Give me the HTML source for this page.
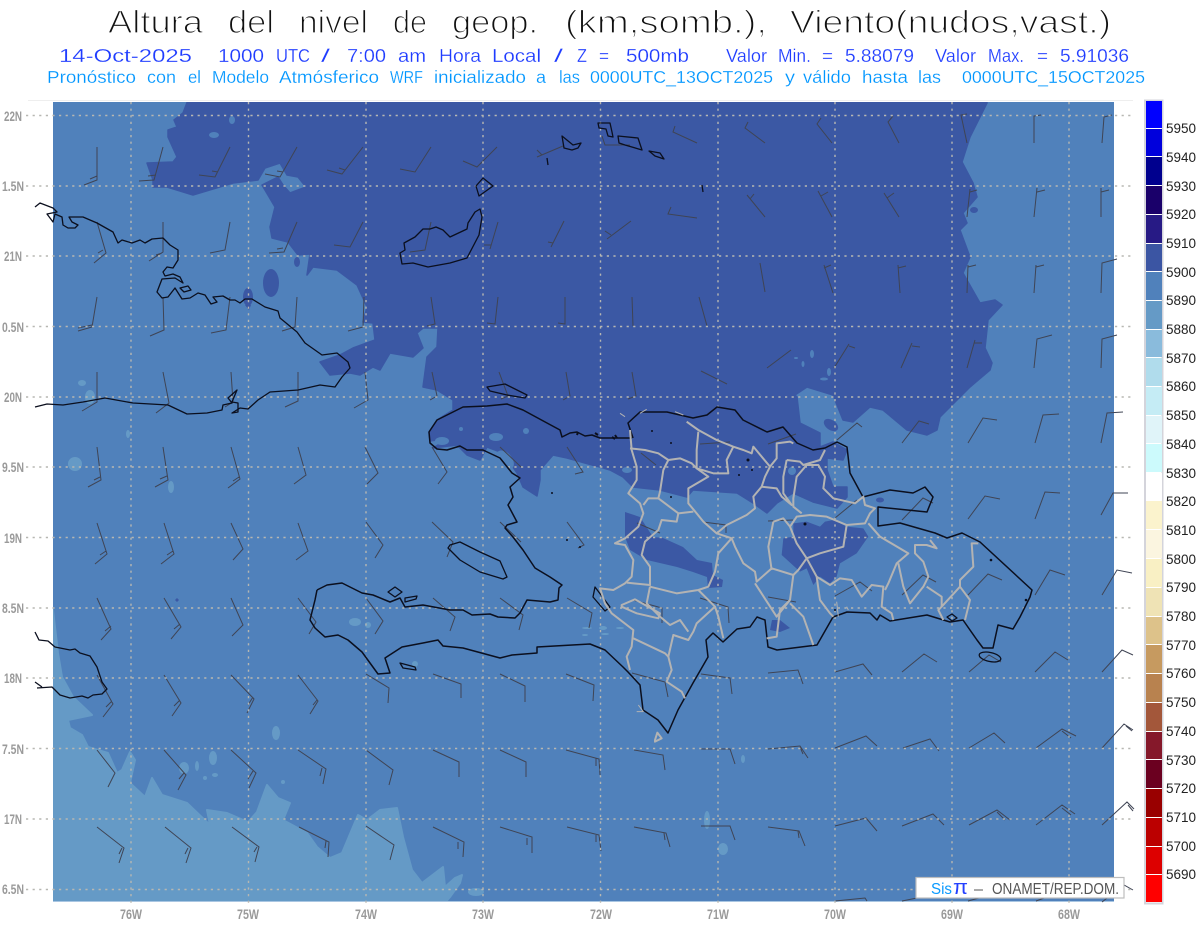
<!DOCTYPE html>
<html lang="es"><head><meta charset="utf-8"><title>Altura del nivel de geop.</title>
<style>
html,body{margin:0;padding:0;background:#fff;width:1200px;height:927px;overflow:hidden}
svg{display:block}
text{font-family:"Liberation Sans",sans-serif;white-space:pre}
.t{font-size:32px;fill:#111;stroke:#fff;stroke-width:1.2px}
.a{font-size:18px;fill:#1f3cff;stroke:#fff;stroke-width:.2px}
.b{font-size:17.5px;fill:#0096ff;stroke:#fff;stroke-width:.2px}
.g{font-size:14px;font-weight:700;fill:#9a9a9a}
.l{font-size:13.5px;fill:#222}
</style></head><body>
<svg width="1200" height="927" viewBox="0 0 1200 927" xmlns="http://www.w3.org/2000/svg">
<rect width="1200" height="927" fill="#fff"/>
<!-- titles -->
<g>
<text class="t" x="108" y="33" textLength="95" lengthAdjust="spacingAndGlyphs">Altura</text>
<text class="t" x="228" y="33" textLength="46" lengthAdjust="spacingAndGlyphs">del</text>
<text class="t" x="299" y="33" textLength="69" lengthAdjust="spacingAndGlyphs">nivel</text>
<text class="t" x="393" y="33" textLength="34" lengthAdjust="spacingAndGlyphs">de</text>
<text class="t" x="452" y="33" textLength="86" lengthAdjust="spacingAndGlyphs">geop.</text>
<text class="t" x="565" y="33" textLength="202" lengthAdjust="spacingAndGlyphs">(km,somb.),</text>
<text class="t" x="790" y="33" textLength="321" lengthAdjust="spacingAndGlyphs">Viento(nudos,vast.)</text>
</g>
<g>
<text class="a" x="59" y="62" textLength="133" lengthAdjust="spacingAndGlyphs">14-Oct-2025</text>
<text class="a" x="218" y="62" textLength="46" lengthAdjust="spacingAndGlyphs">1000</text>
<text class="a" x="276" y="62" textLength="34" lengthAdjust="spacingAndGlyphs">UTC</text>
<text class="a" x="321" y="62" textLength="9" lengthAdjust="spacingAndGlyphs">/</text>
<text class="a" x="347" y="62" textLength="39" lengthAdjust="spacingAndGlyphs">7:00</text>
<text class="a" x="398" y="62" textLength="28" lengthAdjust="spacingAndGlyphs">am</text>
<text class="a" x="439" y="62" textLength="42" lengthAdjust="spacingAndGlyphs">Hora</text>
<text class="a" x="492" y="62" textLength="49" lengthAdjust="spacingAndGlyphs">Local</text>
<text class="a" x="554" y="62" textLength="9" lengthAdjust="spacingAndGlyphs">/</text>
<text class="a" x="577" y="62" textLength="10" lengthAdjust="spacingAndGlyphs">Z</text>
<text class="a" x="599" y="62" textLength="10" lengthAdjust="spacingAndGlyphs">=</text>
<text class="a" x="626" y="62" textLength="63" lengthAdjust="spacingAndGlyphs">500mb</text>
<text class="a" x="726" y="62" textLength="41" lengthAdjust="spacingAndGlyphs">Valor</text>
<text class="a" x="778" y="62" textLength="33" lengthAdjust="spacingAndGlyphs">Min.</text>
<text class="a" x="822" y="62" textLength="11" lengthAdjust="spacingAndGlyphs">=</text>
<text class="a" x="845" y="62" textLength="69" lengthAdjust="spacingAndGlyphs">5.88079</text>
<text class="a" x="935" y="62" textLength="41" lengthAdjust="spacingAndGlyphs">Valor</text>
<text class="a" x="988" y="62" textLength="36" lengthAdjust="spacingAndGlyphs">Max.</text>
<text class="a" x="1037" y="62" textLength="11" lengthAdjust="spacingAndGlyphs">=</text>
<text class="a" x="1060" y="62" textLength="69" lengthAdjust="spacingAndGlyphs">5.91036</text>
</g>
<g>
<text class="b" x="47" y="83" textLength="89" lengthAdjust="spacingAndGlyphs">Pronóstico</text>
<text class="b" x="147" y="83" textLength="29" lengthAdjust="spacingAndGlyphs">con</text>
<text class="b" x="188" y="83" textLength="13" lengthAdjust="spacingAndGlyphs">el</text>
<text class="b" x="212" y="83" textLength="57" lengthAdjust="spacingAndGlyphs">Modelo</text>
<text class="b" x="279" y="83" textLength="100" lengthAdjust="spacingAndGlyphs">Atmósferico</text>
<text class="b" x="390" y="83" textLength="33" lengthAdjust="spacingAndGlyphs">WRF</text>
<text class="b" x="434" y="83" textLength="92" lengthAdjust="spacingAndGlyphs">inicializado</text>
<text class="b" x="536" y="83" textLength="10" lengthAdjust="spacingAndGlyphs">a</text>
<text class="b" x="559" y="83" textLength="21" lengthAdjust="spacingAndGlyphs">las</text>
<text class="b" x="590" y="83" textLength="183" lengthAdjust="spacingAndGlyphs">0000UTC_13OCT2025</text>
<text class="b" x="785" y="83" textLength="10" lengthAdjust="spacingAndGlyphs">y</text>
<text class="b" x="803" y="83" textLength="48" lengthAdjust="spacingAndGlyphs">válido</text>
<text class="b" x="862" y="83" textLength="46" lengthAdjust="spacingAndGlyphs">hasta</text>
<text class="b" x="918" y="83" textLength="23" lengthAdjust="spacingAndGlyphs">las</text>
<text class="b" x="962" y="83" textLength="183" lengthAdjust="spacingAndGlyphs">0000UTC_15OCT2025</text>
</g>
<line x1="28" y1="100.500" x2="1133" y2="100.500" stroke="#eee"/>

<!-- map background -->
<rect x="53" y="102" width="1061" height="800" fill="#5081bb"/>
<clipPath id="m"><rect x="53" y="102" width="1061" height="799"/></clipPath>
<g clip-path="url(#m)">
<!-- light band -->
<path fill="#659ac6" stroke="#659ac6" stroke-width="2" stroke-linejoin="round" d="M53 610L58 653L62 677L73 697L92 715L68 720L70 728L82 735L88 747L108 753L117 773L122 770L130 752L135 760L130 783L145 797L152 778L162 795L187 803L210 825L207 810L227 813L248 822L257 812L267 785L278 798L290 803L283 820L307 833L317 847L330 858L342 853L358 815L367 820L380 810L397 808L403 837L412 870L422 883L443 867L445 887L455 878L462 875L460 883L450 897L443 905L53 905Z"/>
<g fill="#659ac6">
<ellipse cx="75" cy="464" rx="7" ry="7"/><ellipse cx="128" cy="434" rx="2" ry="4"/><ellipse cx="171" cy="487" rx="3" ry="6"/>
<ellipse cx="355" cy="622" rx="6" ry="4"/><ellipse cx="368" cy="625" rx="3" ry="3"/><ellipse cx="276" cy="733" rx="4" ry="7"/>
<ellipse cx="213" cy="758" rx="4" ry="7"/><ellipse cx="184" cy="768" rx="5" ry="6"/><ellipse cx="197" cy="766" rx="2" ry="5"/>
<ellipse cx="215" cy="775" rx="3" ry="2"/><ellipse cx="205" cy="778" rx="2" ry="2"/><ellipse cx="283" cy="782" rx="2" ry="2"/>
<ellipse cx="707" cy="820" rx="3" ry="9"/><ellipse cx="723" cy="849" rx="5" ry="6"/><ellipse cx="743" cy="759" rx="2" ry="4"/>
<ellipse cx="476" cy="892" rx="8" ry="4"/><ellipse cx="415" cy="664" rx="3" ry="3"/>
<ellipse cx="82" cy="383" rx="4" ry="3"/><ellipse cx="90" cy="397" rx="5" ry="7"/>
<ellipse cx="587" cy="628" rx="5" ry="1"/><ellipse cx="603" cy="628" rx="4" ry="2"/><ellipse cx="585" cy="635" rx="3" ry="1"/><ellipse cx="605" cy="634" rx="4" ry="1"/><ellipse cx="620" cy="628" rx="4" ry="1"/>
</g>
<!-- dark main -->
<path fill="#3b58a4" stroke="#3b58a4" stroke-width="1.500" stroke-linejoin="round" d="M188 100L183 113L174 120L177 127L168 130L168 137L177 157L173 162L147 163L153 180L153 187L167 187L193 195L233 183L258 180L265 168L280 163L287 175L298 177L306 187L290 193L283 185L278 177L262 185L275 207L270 227L272 238L288 242L298 255L310 254L307 275L313 267L337 270L357 285L367 307L363 322L373 323L375 340L353 348L340 355L320 362L330 375L350 373L360 375L373 367L380 370L390 353L413 357L423 348L417 333L423 328L438 328L437 347L427 357L423 387L437 390L453 400L453 410L437 420L429 432L430 441L437 440L443 442L433 448L457 445L467 455L480 460L487 447L503 453L517 473L523 487L537 496L540 480L540 470L553 455L567 458L592 465L600 467L610 470L623 477L633 487L660 490L687 497L693 490L737 493L753 503L767 513L777 503L793 493L813 502L837 508L847 497L847 487L833 487L827 470L827 458L843 460L847 450L833 442L820 447L820 433L800 423L797 397L795 395L807 387L833 395L843 420L853 422L870 407L883 410L907 430L927 435L937 430L940 417L970 387L990 370L992 363L985 348L988 320L1002 305L995 300L980 303L963 273L970 257L960 230L967 223L963 213L977 197L973 183L962 162L970 137L987 103L987 100Z"/>
<g fill="#3b58a4">
<ellipse cx="271" cy="283" rx="8" ry="14"/><ellipse cx="248" cy="297" rx="5" ry="9"/><path d="M245 305L251 305L249 310Z"/>
<ellipse cx="297" cy="262" rx="3" ry="5"/>
<path d="M625 512L640 517L653 537L663 538L683 547L697 560L712 563L713 575L723 580L722 587L708 588L707 577L693 572L677 567L647 560L630 550L625 537Z"/>
<path transform="translate(580 390) scale(.33333)" d="M640 400L640 440L610 445L605 495L660 545L680 535L700 585L720 560L750 580L770 560L780 520L830 490L865 440L850 415L800 410L760 390L735 395L720 410L680 395Z"/>
<path d="M772 620L780 620L790 628L780 632L770 630Z"/>
<ellipse cx="831" cy="425" rx="8" ry="5" transform="rotate(35 831 425)"/>
<ellipse cx="880" cy="500" rx="4" ry="2.500"/>
<ellipse cx="974" cy="210" rx="4" ry="3"/>
<path d="M177 598l2 2-2 2-2-2z"/>
</g>
<g fill="#5081bb">
<ellipse cx="214" cy="135" rx="5" ry="3"/><ellipse cx="232" cy="120" rx="3" ry="4"/>
<ellipse cx="812" cy="354" rx="2" ry="4"/><ellipse cx="803" cy="364" rx="1.500" ry="3"/><ellipse cx="829" cy="372" rx="2" ry="4"/>
<ellipse cx="824" cy="379" rx="4" ry="1.500"/><ellipse cx="796" cy="358" rx="2" ry="1"/>
<ellipse cx="496" cy="437" rx="7" ry="4"/><ellipse cx="526" cy="431" rx="3" ry="3"/><ellipse cx="461" cy="429" rx="2" ry="2"/>
<ellipse cx="442" cy="441" rx="7" ry="4"/><ellipse cx="505" cy="460" rx="7" ry="11" transform="rotate(-40 505 460)"/>
<ellipse cx="627" cy="470" rx="5" ry="3"/><ellipse cx="792" cy="471" rx="4" ry="4"/>
</g>
</g>
<line x1="53" y1="901.500" x2="1114" y2="901.500" stroke="#a9c6e2"/>

<!-- wind barbs -->
<path fill="none" stroke="#3f4454" stroke-width="1" d="
M97 147l0 33l-13 5M97 176l-7 3M163 147l-9 33l-15 1M156 175l-8 1M230 147l-15 30l-16-2M218 172l-6-1M297 147l-17 30l-15-3M283 172l-6-1M363 147l-21 27l-15-4M345 170l-6-2M431 147l-16 25l-15-3M497 147l-20 20l-14-6M563 146l-26 11M542 155l-5-5M630 145l-25 0l-3-9M697 143l-24-11l2-6M765 143l-20-15l3-6M832 143l-15-19l4-6M899 143l-11-21l5-6M967 143l-6-28l6-1M1034 143l0-27l7-1M1102 143l2-26l8-2
M97 222l9 31l-12 10M103 250l-5 3M163 222l0 30l-14 9M162 253l-6 2M230 222l-5 28l-15 3M297 222l-13 30l-15 1M283 248l-6 1M363 222l-13 25l-16-2M431 222l-6 28l-15 2M498 222l-8 27M491 245l-7 0M564 221l-13 26M553 243l-5-1M631 221l-24 18M611 235l-6-4M697 218l-29-4l3-7M765 217l-18-22M750 199l4-5M832 217l-14-26M821 196l7-4M899 217l-15-24M887 198l7-5M967 217l3-28M970 192l7-2M1034 217l3-29M1037 192l8-2M1101 217l0-29M1101 192l8-2
M97 297l-5 30l-14 4M92 325l-14 3M163 297l1 33l-14 6M230 297l-4 33l-15 3M297 297l-2 30l-13 4M364 297l-1 30l-15 4M431 297l4 27l-8 2M498 297l-3 27l-8-1M565 297l0 27l-7-1M632 297l1 29M699 297l8 29M760 263l5 29M833 293l-9-28M824 268l7-3M900 293l-2-28M898 268l8-2M967 293l1-28M968 267l8-2M1034 293l2-28M1036 267l8-2M1101 293l1-30l15-4
M97 372l0 30l-15 9M163 372l6 31l-13 10M231 372l2 30l-8 5M298 372l0 29l-13 6M365 372l3 28l-14 8M432 372l5 24l-7 4M499 372l9 24l-7 3M566 372l4 24l-7 4M632 372l4 24l-8 3M701 371l26 13M767 368l24-18M834 368l15-24M849 346l6 2M901 368l11-25M912 346l8 1M967 368l8-28M974 343l8 0M1034 368l3-29l15-4M1101 368l1-29l15-4
M97 447l4 33l-13 7M100 477l-6 3M163 447l5 33l-13 7M167 476l-7 3M231 447l9 32l-12 9M239 477l-6 4M298 447l8 28l-12 9M365 447l13 26l-11 11M432 447l15 25l-9 12M500 447l21 20M567 447l16 25l-8 2M641 453l15 12M700 444l30-2M768 444l28-10M837 440l20-17l5 4M902 443l17-22l10 3M968 443l15-25l14 2M1035 443l8-28l16-1M1101 443l6-30l16-1
M97 523l10 31l-12 10M106 551l-6 4M164 523l10 31l-13 10M173 551l-6 4M231 523l12 26l-10 11M298 523l10 28l-12 9M366 522l17 23l-8 13M432 522l21 20l-6 15M500 522l21 20M567 522l17 23l-6 3M637 523l23 10M703 522l23 3l0 8M768 521l25-1M835 518l22-18M902 520l21-22l10 5M968 519l17-23l15 3M1035 519l10-27l15 1M1101 515l12-22l15 0
M97 598l14 31l-10 11M111 626l-6 5M164 598l17 29l-10 12M180 624l-6 5M231 598l12 27l-11 11M298 598l18 24l-7 12M366 598l17 23l-8 13M433 598l22 19l-5 14M500 598l23 17l-4 15M567 598l25 15l-3 15M633 600l29 8l0 15M700 598l28 9l1 16M768 597l28 5M835 596l25-14l12 9M902 595l21-20l13 7M968 595l20-21l14 6M1035 595l15-25l15 5M1102 595l15-25l15 3
M97 675l16 29l-10 13M112 701l-6 6M164 675l17 28l-9 13M180 700l-6 6M231 675l23 24l-7 14M253 697l-5 8M298 675l20 26l-8 13M317 700l-4 5M366 674l23 14l-1 15M433 674l28 10l0 14M500 674l25 12l0 16M566 674l28 11l-1 16M632 673l33 9l3 15M701 674l29 4l2 16M768 673l30-3l5 14M835 672l28-8l9 11M902 672l22-18l13 8M969 672l20-17l12 7M1035 672l20-20l13 8M1102 672l20-22l11 5
M97 750l18 23l-7 14M164 750l22 25l-8 15M184 773l-5 6M231 750l25 23l-7 15M253 771l-5 8M298 750l28 19l-3 15M322 768l-2 8M366 750l27 20l-4 15M433 750l26 12l0 15M500 750l26 12l0 15M566 750l33 9l1 16M596 758l0 8M634 750l29 5l2 15M701 749l29 0l5 15M768 749l32-3l8 12M800 747l3 7M835 748l31-12l11 10M903 748l27-9l9 12M969 748l25-15l11 10M1036 748l26-19l14 7M1062 731l9 7M1102 748l22-24l9 6M1126 726l6 5
M97 827l27 21l-5 15M122 848l-3 6M165 827l26 21l-5 15M188 848l-3 6M232 827l27 20l-4 15M257 847l-3 5M299 827l30 15l-1 15M326 841l-1 7M366 826l28 19l-4 15M433 827l31 15l-1 15M458 842l0 7M500 827l32 10l0 16M527 838l0 7M567 827l32 8l2 16M596 835l0 7M634 827l32 6l4 14M664 833l1 7M701 826l29 0l5 14M768 827l31 4l6 15M798 831l1 7M835 826l31-8l11 13M902 826l31-12l11 11M969 825l28-15l13 10M997 812l8 8M1036 825l26-20l13 9M1062 808l9 7M1102 825l25-23l7 7M1128 805l5 6
M835 901l30-3l2 3M902 901l25-5M968 901l22-6M1036 901l22-8M1102 902l22-17l9 5"/>

<!-- graticule -->
<g fill="none" stroke="#b7b7b2" stroke-width="1.400" stroke-dasharray="2.200 4.400">
<path d="M26 115.500H1133M26 186H1133M26 256H1133M26 326.500H1133M26 397H1133M26 467H1133M26 537.500H1133M26 608H1133M26 678H1133M26 748.500H1133M26 819H1133M26 889.500H1133"/>
<path d="M131 102V906M248.500 102V906M366 102V906M483 102V906M600.500 102V906M718 102V906M835 102V906M952 102V906M1069 102V906"/>
</g>

<!-- coasts -->
<g fill="none" stroke="#0b0f1e" stroke-width="1.300" stroke-linejoin="round">
<path d="M35 207L40 203L53 208L57 212L47 214L53 222L55 214L62 217L63 225L68 228L75 228L78 225L72 222L69 217L83 217L97 223L113 232L118 243L122 240L132 243L140 240L145 243L152 239L163 238L170 245L178 250L178 260L173 268L167 267L163 272L165 276L173 274L180 277L183 283L175 278L162 279L157 292L162 298L168 297L175 288L182 299L190 298L198 293L205 295L211 304L217 302L213 297L223 296L230 300L235 300L240 303L245 299L252 299L265 307L278 311L280 318L297 332L305 343L322 355L337 353L348 362L350 368L342 377L335 387L320 385L298 390L270 392L258 400L248 409L240 408L232 413L238 412L238 403L232 402L237 390L228 398L232 403L223 405L222 410L207 413L187 414L168 405L133 403L105 398L83 402L63 405L47 404L35 407"/>
<path d="M180 288L188 286L191 290L184 292Z"/>
<path d="M35 632L39 640L48 641L55 647L70 650L75 649L80 653L90 656L97 667L102 682L107 689L102 694L93 695L88 698L82 696L70 698L60 695L52 687L37 688M35 682L42 687"/>
<path stroke-width="1.500" d="M317 590L327 585L342 583L362 593L373 595L390 602L400 598L405 607L423 605L450 610L463 610L472 615L490 614L498 617L515 618L520 613L527 600L550 602L558 600L559 588L562 585L550 577L535 568L523 550L513 537L505 528L507 525L517 522L508 505L513 497L510 487L520 478L512 473L500 458L483 450L467 450L460 446L447 450L437 449L430 443L429 432L437 420L453 412L463 407L487 406L507 404L523 410L547 423L560 430L562 437L570 433L577 432L585 436L592 435L600 438L612 438L632 438"/>
<path stroke-width="1.500" d="M317 590L315 600L310 620L315 628L325 637L338 635L348 640L362 652L378 674L390 673L385 658L402 647L423 643L438 640L443 646L463 648L500 658L512 655L537 653L537 647L590 644L605 650L623 667L628 672L640 685L643 710L658 720L668 733L678 710L693 683L708 657L706 640L713 633L723 642L737 629L750 627L757 617L765 620L768 647L777 650L817 645L833 617L847 612L870 613L877 620L880 615L890 621L927 615L950 622L963 620L977 640L983 648L993 648L998 625L1013 629L1020 617L1030 597L1032 590L980 542L962 533L947 538L935 533L900 523L878 526L878 507L927 512L933 497L925 487L913 493L890 490L863 497L850 473L847 447L837 442L825 448L813 450L797 443L783 427L767 432L743 420L735 410L717 407L707 415L693 418L667 412L640 412L628 423L633 438"/>
<path d="M450 545L460 542L480 552L500 561L507 577L503 579L480 572L460 560L448 548Z"/>
<path d="M487 387L505 384L527 395L525 398L507 395L490 391Z"/>
<path d="M388 592L395 587L402 592L395 597Z"/><path d="M405 598L417 596L416 599L405 602Z"/>
<path d="M400 663L415 667L416 670L403 668Z"/><path d="M595 587L610 607L605 611L593 597Z"/>
<ellipse cx="990" cy="657" rx="11" ry="4.500" transform="rotate(12 990 657)"/>
<path d="M947 617L952 614L957 618L952 621Z"/>
<path d="M400 253L405 250L404 243L415 237L423 229L430 229L436 227L443 230L450 237L467 229L468 223L475 212L480 209L482 217L479 235L467 258L450 263L428 267L413 263L402 264Z"/>
<path d="M476 186L483 178L493 186L479 196Z"/>
<path d="M562 136L573 145L581 143L578 148L572 150L564 148Z"/><path d="M547 158L548 165"/>
<path d="M598 123L610 123L612 132L613 137L608 136L606 129L599 128Z"/>
<path d="M618 136L638 138L642 150L625 145L619 143Z"/><path d="M649 151L660 153L664 159L655 156Z"/>
<path d="M702 185L703 192"/>
<path stroke-width="2" d="M595 433l3 2M612 437l3 2M615 435l2 3M578 432l-1 3"/>
</g>
<g fill="#0b0f1e"><circle cx="652" cy="431" r="1"/><circle cx="671" cy="443" r="1"/><circle cx="748" cy="460" r="1.500"/><circle cx="752" cy="470" r="1"/><circle cx="805" cy="524" r="1.500"/><circle cx="991" cy="560" r="1.300"/><circle cx="1026" cy="600" r="1.300"/><circle cx="580" cy="547" r="1"/><circle cx="552" cy="493" r="1"/><circle cx="567" cy="540" r="1"/><circle cx="835" cy="610" r="1"/><circle cx="739" cy="475" r="1"/><circle cx="671" cy="497" r="1"/></g>

<!-- provinces -->
<g transform="translate(580 390) scale(.33333)" fill="none" stroke="#b3b3b3" stroke-width="6" stroke-linejoin="round">
<path d="M150 120L155 180L170 230L170 270L145 310L180 340L190 370L175 410L135 445L105 460L135 465L160 510L155 560L135 580L100 600L60 595L75 640L95 670L160 720L155 770L140 800L150 840"/>
<path d="M150 175L195 180L235 190L265 210L300 205L335 220L350 235L350 180L355 125"/>
<path d="M320 95L355 120L410 150L460 170L490 180L515 190L520 170L545 200L570 230L555 260L545 290L520 320L525 355L500 375L440 405L410 430L370 395L350 370L325 340L325 295L385 260L350 235L400 250L445 250L440 210L460 170"/>
<path d="M265 210L250 240L240 305L235 325L295 370L340 365"/>
<path d="M235 325L205 325L190 345M295 370L290 395L245 390L235 420L195 455L185 495L210 530L210 585L140 578M210 590L290 610L355 600L385 590L405 545L415 490L455 445L410 430"/>
<path d="M355 600L395 640L405 650L415 680L430 745M405 650L350 700L340 725L325 750L280 735L265 800L275 840L260 875L305 905L315 925M325 725L300 690L270 705L240 680L200 640L210 590M160 745L255 790L265 800"/>
<path d="M455 445L465 470L490 520L525 545L530 575L575 535L640 555L655 540L680 505L650 460L630 410L650 380L690 375L740 380L800 405L855 400L870 370L885 355L855 345L850 320L825 340L760 325L730 295L735 260L715 225L680 225L650 260L640 325L640 350L665 370"/>
<path d="M570 230L590 205L590 160L630 155L640 160M620 210L610 260L610 310L635 345L605 320L590 295L545 290M620 210L660 215L670 225L720 210L735 180"/>
<path d="M580 395L610 385L630 410M580 395L565 470L575 540"/>
<path d="M800 405L790 470L720 490L680 505L710 560L750 585L780 565L815 570L845 620L875 585L910 590L905 650L935 670L940 690M710 560L720 630L750 670L760 680"/>
<path d="M640 555L630 630L590 680L525 580M630 630L600 660L590 740L560 745M630 640L670 680L700 765"/>
<path d="M865 400L900 440L985 490L950 520L925 580L915 600M955 520L970 590L990 640L1030 590L1045 560L1030 515L1005 490L1005 465L1040 465L1070 475L1050 450M1040 590L1085 620L1085 650L1075 660L1090 690M1085 650L1140 590L1170 630L1155 690M1140 590L1140 570L1180 530L1175 460L1195 460"/>
<path d="M125 645L165 628L240 670L235 685L170 670L125 650Z"/>
<path d="M225 1050L232 1028L245 1045L225 1055Z"/>
<path d="M170 965L190 965L175 945" stroke-width="3"/>
<path d="M120 70L135 80M285 65L310 75M180 70L200 58M770 635L775 680M800 650L805 660" stroke-width="3"/>
</g>

<!-- axis labels -->
<g>
<text class="g" x="4" y="121" textLength="18" lengthAdjust="spacingAndGlyphs">22N</text>
<text class="g" x="2" y="191" textLength="22" lengthAdjust="spacingAndGlyphs">1.5N</text>
<text class="g" x="4" y="261" textLength="18" lengthAdjust="spacingAndGlyphs">21N</text>
<text class="g" x="2" y="332" textLength="22" lengthAdjust="spacingAndGlyphs">0.5N</text>
<text class="g" x="4" y="402" textLength="18" lengthAdjust="spacingAndGlyphs">20N</text>
<text class="g" x="2" y="472" textLength="22" lengthAdjust="spacingAndGlyphs">9.5N</text>
<text class="g" x="4" y="543" textLength="18" lengthAdjust="spacingAndGlyphs">19N</text>
<text class="g" x="2" y="613" textLength="22" lengthAdjust="spacingAndGlyphs">8.5N</text>
<text class="g" x="4" y="683" textLength="18" lengthAdjust="spacingAndGlyphs">18N</text>
<text class="g" x="2" y="754" textLength="22" lengthAdjust="spacingAndGlyphs">7.5N</text>
<text class="g" x="4" y="824" textLength="18" lengthAdjust="spacingAndGlyphs">17N</text>
<text class="g" x="2" y="894" textLength="22" lengthAdjust="spacingAndGlyphs">6.5N</text>
<text class="g" x="120" y="919" textLength="22" lengthAdjust="spacingAndGlyphs">76W</text>
<text class="g" x="237" y="919" textLength="22" lengthAdjust="spacingAndGlyphs">75W</text>
<text class="g" x="355" y="919" textLength="22" lengthAdjust="spacingAndGlyphs">74W</text>
<text class="g" x="472" y="919" textLength="22" lengthAdjust="spacingAndGlyphs">73W</text>
<text class="g" x="590" y="919" textLength="22" lengthAdjust="spacingAndGlyphs">72W</text>
<text class="g" x="707" y="919" textLength="22" lengthAdjust="spacingAndGlyphs">71W</text>
<text class="g" x="824" y="919" textLength="22" lengthAdjust="spacingAndGlyphs">70W</text>
<text class="g" x="941" y="919" textLength="22" lengthAdjust="spacingAndGlyphs">69W</text>
<text class="g" x="1058" y="919" textLength="22" lengthAdjust="spacingAndGlyphs">68W</text>
</g>

<!-- logo box -->
<rect x="916" y="877.500" width="208" height="20.500" fill="#fff" stroke="#bdbdbd" stroke-width="1.200"/>
<text x="931" y="894" font-size="15.500" fill="#0a9aff" textLength="21" lengthAdjust="spacingAndGlyphs">Sis</text>
<text x="953" y="894" font-size="20" fill="#2440ff" textLength="15" lengthAdjust="spacingAndGlyphs">π</text>
<text x="974" y="894" font-size="15" fill="#555" textLength="9" lengthAdjust="spacingAndGlyphs">–</text>
<text x="992" y="894" font-size="16" fill="#555" textLength="127" lengthAdjust="spacingAndGlyphs">ONAMET/REP.DOM.</text>

<!-- legend -->
<rect x="1145" y="100.500" width="17.500" height="803" fill="#fff" stroke="#d4d4db" stroke-width="2"/>
<g>
<rect x="1146" y="101" width="16" height="27" fill="#0000ff"/>
<rect x="1146" y="129" width="16" height="27" fill="#0000dc"/>
<rect x="1146" y="157" width="16" height="28" fill="#00008e"/>
<rect x="1146" y="186" width="16" height="28" fill="#1a006a"/>
<rect x="1146" y="215" width="16" height="28" fill="#271a85"/>
<rect x="1146" y="244" width="16" height="27" fill="#3b55a3"/>
<rect x="1146" y="272" width="16" height="28" fill="#5081bb"/>
<rect x="1146" y="301" width="16" height="28" fill="#659ac6"/>
<rect x="1146" y="330" width="16" height="27" fill="#8abbdc"/>
<rect x="1146" y="358" width="16" height="28" fill="#b0dcec"/>
<rect x="1146" y="387" width="16" height="28" fill="#c5ecf5"/>
<rect x="1146" y="416" width="16" height="27" fill="#e0f4f9"/>
<rect x="1146" y="444" width="16" height="28" fill="#ccfafc"/>
<rect x="1146" y="473" width="16" height="28" fill="#ffffff"/>
<rect x="1146" y="501" width="16" height="28" fill="#fbf3cd"/>
<rect x="1146" y="530" width="16" height="28" fill="#fbf5e0"/>
<rect x="1146" y="559" width="16" height="28" fill="#f9f0c4"/>
<rect x="1146" y="588" width="16" height="28" fill="#efe3b5"/>
<rect x="1146" y="617" width="16" height="27" fill="#ddc28a"/>
<rect x="1146" y="645" width="16" height="28" fill="#c69a60"/>
<rect x="1146" y="674" width="16" height="28" fill="#b8824f"/>
<rect x="1146" y="703" width="16" height="28" fill="#a3573a"/>
<rect x="1146" y="732" width="16" height="27" fill="#85182a"/>
<rect x="1146" y="760" width="16" height="28" fill="#6b0020"/>
<rect x="1146" y="789" width="16" height="28" fill="#990000"/>
<rect x="1146" y="818" width="16" height="28" fill="#bb0000"/>
<rect x="1146" y="847" width="16" height="27" fill="#dd0000"/>
<rect x="1146" y="875" width="16" height="27" fill="#ff0000"/>
</g>
<g>
<text class="l" x="1166" y="133">5950</text><text class="l" x="1166" y="162">5940</text><text class="l" x="1166" y="191">5930</text><text class="l" x="1166" y="219">5920</text><text class="l" x="1166" y="248">5910</text><text class="l" x="1166" y="277">5900</text><text class="l" x="1166" y="305">5890</text><text class="l" x="1166" y="334">5880</text><text class="l" x="1166" y="363">5870</text><text class="l" x="1166" y="391">5860</text><text class="l" x="1166" y="420">5850</text><text class="l" x="1166" y="449">5840</text><text class="l" x="1166" y="478">5830</text><text class="l" x="1166" y="506">5820</text><text class="l" x="1166" y="535">5810</text><text class="l" x="1166" y="564">5800</text><text class="l" x="1166" y="592">5790</text><text class="l" x="1166" y="621">5780</text><text class="l" x="1166" y="650">5770</text><text class="l" x="1166" y="678">5760</text><text class="l" x="1166" y="707">5750</text><text class="l" x="1166" y="736">5740</text><text class="l" x="1166" y="765">5730</text><text class="l" x="1166" y="793">5720</text><text class="l" x="1166" y="822">5710</text><text class="l" x="1166" y="851">5700</text><text class="l" x="1166" y="879">5690</text>
</g>
</svg>
</body></html>
